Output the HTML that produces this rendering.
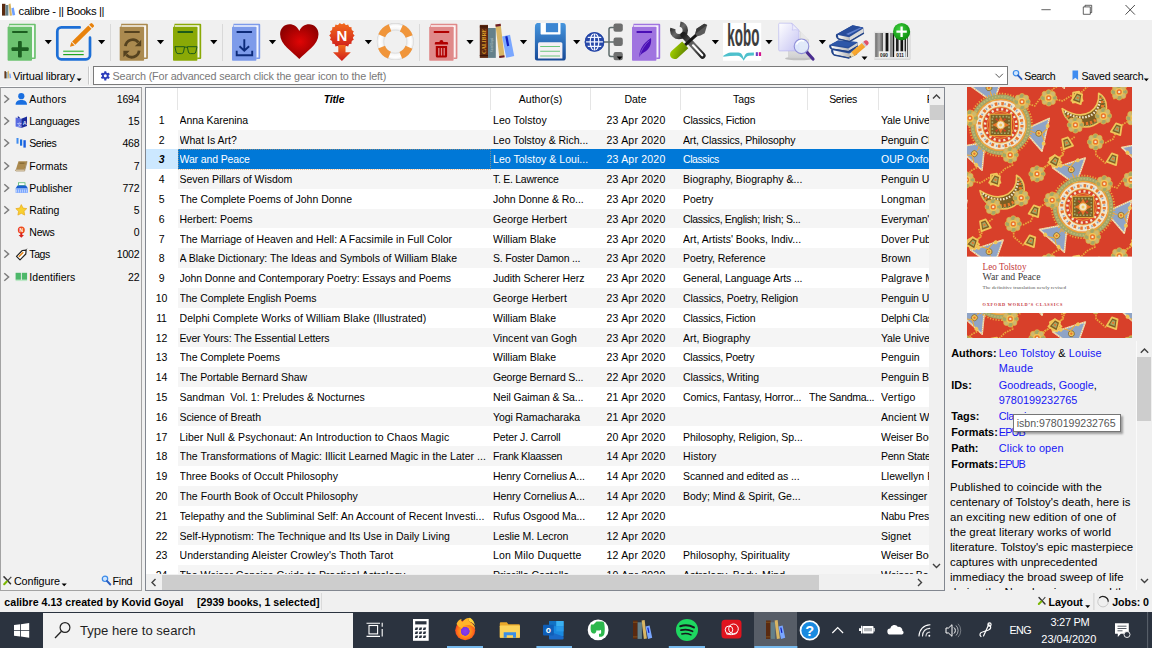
<!DOCTYPE html>
<html lang="en">
<head>
<meta charset="utf-8">
<title>calibre - || Books ||</title>
<style>
html,body{margin:0;padding:0;}
body{width:1152px;height:648px;overflow:hidden;background:#f0f0f0;font-family:"Liberation Sans",sans-serif;font-size:10.500px;color:#000;position:relative;}
*{box-sizing:border-box;}
.abs{position:absolute;}
#titlebar{position:absolute;left:0;top:0;width:1152px;height:20px;background:#fff;}
#titlebar .t{position:absolute;left:18.600px;top:3.500px;font-size:11.300px;letter-spacing:-0.340px;line-height:14px;white-space:nowrap;}
#toolbar{position:absolute;left:0;top:20px;width:1152px;height:45px;background:#f0f0f0;}
#toolbar svg.ic{position:absolute;top:2px;overflow:visible;}
.dd{position:absolute;width:0;height:0;border-left:3px solid transparent;border-right:3px solid transparent;border-top:3px solid #000;top:41px;}
.tsep{position:absolute;top:24px;width:1px;height:36px;background:#dcdcdc;}
#searchrow{position:absolute;left:0;top:65px;width:1152px;height:22px;}
.lbl{position:absolute;white-space:nowrap;line-height:14px;}
</style>
</head>
<body>
<div id="titlebar">
<svg class="abs" style="left:0;top:0" width="20" height="20" viewBox="0 0 20 20">
<rect x="2" y="3.8" width="3.4" height="11.8" fill="#5a2a10"/>
<rect x="5.4" y="5" width="3" height="10.6" fill="#64808a"/>
<polygon points="8.6,3.9 10.6,3.6 12,15.4 9.8,15.7" fill="#d9b664"/>
<polygon points="11.4,8.2 13.8,7.6 15.2,15 12.6,15.6" fill="#6fa0ff"/>
</svg>
<div class="t">calibre - || Books ||</div>
<svg class="abs" style="left:1030px;top:0" width="122" height="20" viewBox="0 0 122 20">
<path d="M11.4 9.7h9.3" stroke="#222" stroke-width="0.7" fill="none"/>
<path d="M53.3 6.9h7v7.4h-7z M55 6.900v-1.600h6.700v7.300h-1.400" stroke="#222" stroke-width="0.7" fill="none"/>
<path d="M95.5 5l9.400 9.600M104.900 5l-9.400 9.600" stroke="#222" stroke-width="0.8" fill="none"/>
</svg>
</div>
<svg id="tbsvg" class="abs" style="left:0;top:0" width="1152" height="66" viewBox="0 0 1152 66">
<defs>
<radialGradient id="gHeart" cx="0.52" cy="0.5" r="0.55"><stop offset="0" stop-color="#e00505"/><stop offset="1" stop-color="#8f0000"/></radialGradient>
<linearGradient id="gNews" x1="0" y1="0" x2="0" y2="1"><stop offset="0" stop-color="#f26a1c"/><stop offset="1" stop-color="#cf1c1c"/></linearGradient>
<linearGradient id="gSave" x1="0" y1="0" x2="0" y2="1"><stop offset="0" stop-color="#4595de"/><stop offset="1" stop-color="#184a97"/></linearGradient>
<radialGradient id="gBuoy" gradientUnits="userSpaceOnUse" cx="0" cy="0" r="18.500"><stop offset="0.600" stop-color="#d9d9d9"/><stop offset="0.700" stop-color="#f7f7f7"/><stop offset="0.850" stop-color="#ffffff"/><stop offset="0.940" stop-color="#f0f0f0"/><stop offset="1" stop-color="#d2d2d2"/></radialGradient>
<linearGradient id="gPage" x1="0" y1="0" x2="1" y2="1"><stop offset="0" stop-color="#ffffff"/><stop offset="1" stop-color="#c5c3f3"/></linearGradient>
<linearGradient id="gPage2" x1="0" y1="0" x2="0" y2="1"><stop offset="0" stop-color="#ffffff"/><stop offset="1" stop-color="#d0d0d0"/></linearGradient>
<linearGradient id="gGreenH" x1="0" y1="0" x2="1" y2="1"><stop offset="0" stop-color="#a6d400"/><stop offset="1" stop-color="#5e8200"/></linearGradient>
<linearGradient id="gWrench" x1="0" y1="0" x2="1" y2="1"><stop offset="0" stop-color="#1e1e1e"/><stop offset="0.5" stop-color="#6a6a6a"/><stop offset="1" stop-color="#222"/></linearGradient>
<radialGradient id="gPlus" cx="0.4" cy="0.35" r="0.7"><stop offset="0" stop-color="#3fd23f"/><stop offset="1" stop-color="#0a8a0a"/></radialGradient>
<linearGradient id="gBar" x1="0" y1="0" x2="1" y2="0"><stop offset="0" stop-color="#6a6a6a"/><stop offset="0.5" stop-color="#a8a8a8"/><stop offset="1" stop-color="#555"/></linearGradient>
<g id="book">
<path d="M1.600 0h25.600a1 1 0 0 1 1 1v33.300a1 1 0 0 1-1 1h-3v-30h-23.600z" fill="var(--c)"/>
<path d="M1.800 1.600h24.700v32.200h-2.300v-30.500h-22.400z" fill="#fff" opacity="0.92"/>
<rect x="0" y="3.100" width="24.400" height="34" rx="0.800" fill="var(--c)"/>
<rect x="4.500" y="7.200" width="15.600" height="2" rx="0.600" fill="var(--d)"/>
</g>
<path id="ddarrow" d="M-3.600 0h7.200l-3.600 4.200z" fill="#000"/>
</defs>

<!-- separators -->
<g fill="#d9d9d9"><rect x="110" y="24" width="1" height="37"/><rect x="222" y="24" width="1" height="37"/><rect x="419" y="24" width="1" height="37"/></g>

<!-- dropdown arrows -->
<g>
<use href="#ddarrow" x="48.300" y="40"/><use href="#ddarrow" x="101.600" y="40"/><use href="#ddarrow" x="160.500" y="40"/><use href="#ddarrow" x="213.800" y="40"/>
<use href="#ddarrow" x="272.500" y="40"/><use href="#ddarrow" x="368.400" y="40"/><use href="#ddarrow" x="470" y="40"/><use href="#ddarrow" x="523.500" y="40"/>
<use href="#ddarrow" x="576.700" y="40"/><use href="#ddarrow" x="715.400" y="40"/><use href="#ddarrow" x="769" y="40"/><use href="#ddarrow" x="822.400" y="40"/>
</g>

<!-- add book -->
<g transform="translate(7.600 23.700)" style="--c:#6cc270;--d:#1b5e20"><use href="#book"/>
<rect x="10.400" y="17.200" width="3.800" height="16.600" rx="1" fill="#1b5e20"/><rect x="3.900" y="23.600" width="17.200" height="3.800" rx="1" fill="#1b5e20"/></g>

<!-- edit metadata -->
<g>
<path d="M79.700 27.400h-18.400a4 4 0 0 0-4 4v23.900a4 4 0 0 0 4 4h24.700a4 4 0 0 0 4-4v-17.600" fill="none" stroke="#1d6fd6" stroke-width="2.700" stroke-linecap="round"/>
<path d="M63.200 51.300h20.500" stroke="#5cc35c" stroke-width="1.500"/><path d="M63.200 54.600h20.500" stroke="#1fa31f" stroke-width="1.200"/>
<path d="M70 46.700l1.400-4.600 3.200 3.300z" fill="#e8820c"/>
<path d="M72.100 41.400l16.200-15.900 3.200 3.300-16.200 15.900z" fill="#e8820c"/>
<path d="M89.100 24.800l1.400-1.400a1.300 1.300 0 0 1 1.800 0l1.400 1.500a1.300 1.300 0 0 1 0 1.800l-1.400 1.400z" fill="#e8820c"/>
</g>

<!-- convert -->
<g transform="translate(119.700 23.700)" style="--c:#ab8a4f;--d:#55421f"><use href="#book"/>
<path d="M5.800 22.500a7.200 7.200 0 0 1 12.800-3.800" fill="none" stroke="#55421f" stroke-width="2.800"/>
<path d="M15.200 22.600h6.300v-6.500z" fill="#55421f"/>
<path d="M19.400 27a7.200 7.200 0 0 1-12.800 3.800" fill="none" stroke="#55421f" stroke-width="2.800"/>
<path d="M10 27h-6.300v6.500z" fill="#55421f"/></g>

<!-- view -->
<g transform="translate(173 23.700)" style="--c:#8aa906;--d:#1d5a1a"><use href="#book"/>
<g fill="none" stroke="#1d5a1a" stroke-width="1"><path d="M1.900 23h9.700l-1.100 5.300a2 2 0 0 1-2 1.600h-3.400a2 2 0 0 1-2-1.600z"/><path d="M14.300 23h9.700l-1.200 5.300a2 2 0 0 1-2 1.600h-3.400a2 2 0 0 1-2-1.600z"/><path d="M11.400 23.800q1.500-0.900 3 0"/></g></g>

<!-- download -->
<g transform="translate(232 23.700)" style="--c:#7d9bea;--d:#0d2b7a"><use href="#book"/>
<path d="M12.300 15.600v11M7.500 22.500l4.800 4.600 4.800-4.600M4.700 27v4.600h15.500v-4.600" stroke="#0d2b7a" stroke-width="1.900" fill="none"/></g>

<!-- heart -->
<path d="M299.300 59c-7-7.500-19.200-14.500-19.200-24.800c0-6 4.300-9.900 9.300-9.900c4.500 0 8.200 2.500 9.900 6.800c1.700-4.300 5.400-6.800 9.900-6.800c5 0 9.300 3.900 9.300 9.900c0 10.300-12.200 17.300-19.200 24.800z" fill="url(#gHeart)"/>

<!-- fetch news -->
<g fill="url(#gNews)">
<circle cx="341.900" cy="35.500" r="11.300"/>
<polygon points="354.6,35.5 352.7,37.4 353.8,39.8 351.4,41.0 351.6,43.7 349.0,43.9 348.2,46.5 345.7,45.8 344.1,48.0 341.9,46.5 339.7,48.0 338.1,45.8 335.5,46.5 334.8,43.9 332.2,43.7 332.4,41.0 330.0,39.8 331.1,37.4 329.2,35.5 331.1,33.6 330.0,31.2 332.4,30.0 332.2,27.3 334.8,27.1 335.5,24.5 338.1,25.2 339.7,23.0 341.9,24.5 344.1,23.0 345.7,25.2 348.2,24.5 349.0,27.1 351.6,27.3 351.4,30.0 353.8,31.2 352.7,33.6"/>
<path d="M338.300 45h7.200v7.200h5.300l-8.900 8.700l-8.900-8.700h5.300z"/>
</g>
<text x="341.900" y="40.800" font-family="Liberation Sans,sans-serif" font-weight="bold" font-size="15" text-anchor="middle" fill="#fff">N</text>

<!-- lifebuoy -->
<g transform="translate(395.300 41.600)">
<circle r="14.800" fill="none" stroke="url(#gBuoy)" stroke-width="7.400"/>
<circle r="14.800" fill="none" stroke="#f0953a" stroke-width="7.400" stroke-dasharray="11.620 11.620" stroke-dashoffset="-5.810" transform="rotate(0)"/>
</g>

<!-- remove -->
<g transform="translate(429.200 23.700)" style="--c:#e08a8a;--d:#b00000"><use href="#book"/>
<g fill="#b00000"><path d="M5.600 19.600a1.300 1.300 0 0 1 1.300-1.300h3.300a2 2 0 0 1 4 0h3.400a1.300 1.300 0 0 1 1.300 1.300v1.200h-13.300z"/><path d="M6.600 22.300h11.300v10a1.600 1.600 0 0 1-1.600 1.600h-8.100a1.600 1.600 0 0 1-1.600-1.600z"/></g>
<path d="M9.600 24.300v7.600M12.300 24.300v7.600M15 24.300v7.600" stroke="#e08a8a" stroke-width="1.300"/></g>

<!-- library -->
<g>
<rect x="479.800" y="24.900" width="8.200" height="33" fill="#5a2710"/>
<rect x="479.800" y="26.400" width="8.200" height="1" fill="#3a1406"/><rect x="479.800" y="55" width="8.200" height="1" fill="#3a1406"/>
<text transform="translate(486.300 54) rotate(-90)" font-family="Liberation Serif,serif" font-weight="bold" font-size="5.200" fill="#e0a22a" textLength="25" lengthAdjust="spacingAndGlyphs">CALIBRE</text>
<rect x="488" y="28" width="7.800" height="29.900" fill="#64808a"/>
<text transform="translate(493.200 52) rotate(-90)" font-family="Liberation Sans,sans-serif" font-size="3" fill="#b9c8cc" textLength="14" lengthAdjust="spacingAndGlyphs">Kovid Goyal</text>
<polygon points="495.400,24.600 500.600,23.800 504.600,57.300 499.400,58.100" fill="#d9b664"/>
<polygon points="495.400,24.600 500.600,23.800 500.900,26 495.700,26.800" fill="#6a1a2a"/><polygon points="499.100,56 504.300,55.200 504.600,57.300 499.400,58.100" fill="#6a1a2a"/>
<polygon points="502.100,36.500 510,34.700 514.200,56 506.200,57.800" fill="#7aa7ff"/>
<polygon points="505.200,36.600 507.400,36.100 509.300,45.700 507.100,46.200" fill="#1020c0"/>
</g>

<!-- save -->
<g>
<path d="M536.900 23.100h26a2.900 2.900 0 0 1 2.900 2.900v31.700a2.900 2.900 0 0 1-2.900 2.900h-25.900a2.100 2.100 0 0 1-2.100-2.100v-31a4.400 4.400 0 0 1 2-4.400z" fill="url(#gSave)"/>
<path d="M540.600 23.100h19.900v10.300a1.200 1.200 0 0 1-1.200 1.200h-17.500a1.200 1.200 0 0 1-1.200-1.200z" fill="#fff"/>
<rect x="545.900" y="23.100" width="12.200" height="9.100" fill="#3c86d2"/>
<path d="M539.500 42.200h21.400a1.500 1.500 0 0 1 1.500 1.500v14.700h-24.400v-14.700a1.500 1.500 0 0 1 1.500-1.500z" fill="#f4f0f4"/>
<path d="M540.200 46.500h19.800M540.200 51.300h19.800M540.200 56h19.800" stroke="#6cc67c" stroke-width="1.100"/>
</g>

<!-- connect/share -->
<g>
<circle cx="594.500" cy="41.900" r="9.700" fill="#2748a8"/>
<g fill="none" stroke="#f2f5ff" stroke-width="1.250"><ellipse cx="594.500" cy="41.900" rx="4.300" ry="8.600"/><path d="M594.500 33v17.800M586 41.900h17M587.500 37.400h14M587.500 46.400h14"/></g>
<circle cx="594.500" cy="41.900" r="9.200" fill="none" stroke="#2748a8" stroke-width="1.400"/>
<path d="M604 41.900h10M614 27.400h-3.200a1.800 1.800 0 0 0-1.800 1.800v25.400a1.800 1.800 0 0 0 1.800 1.800h3.200" fill="none" stroke="#5d6b6b" stroke-width="1.500"/>
<g fill="#6e6f6f"><rect x="613.500" y="23.400" width="9.300" height="8.300" rx="2.200"/><rect x="613.500" y="37.600" width="9.300" height="8.300" rx="2.200"/><rect x="613.500" y="52" width="9.300" height="8.300" rx="2.200"/></g>
<path d="M616.700 56.600h5.800l-2.900 3.200z" fill="#000"/>
</g>

<!-- edit book -->
<g transform="translate(632 23.700)" style="--c:#a074e0;--d:#4a0fb5"><use href="#book"/>
<path d="M7.200 33.200c0.300-6.500 3-13.500 11.800-19c0.800 5.500-1.200 11.500-7.300 14.600c-1.700 0.900-3.200 2.300-4.500 4.400z" fill="#4a0fb5"/>
<path d="M7.600 32.500c1.500-6 5-11.500 9.500-15.500" stroke="#a074e0" stroke-width="0.600" fill="none"/></g>

<!-- preferences -->
<g>
<circle cx="679" cy="30.300" r="6.300" fill="none" stroke="url(#gWrench)" stroke-width="5.400" stroke-dasharray="30.680 8.900" stroke-dashoffset="-30.100"/>
<path d="M683.500 35l19 20.600" stroke="url(#gWrench)" stroke-width="6.200" stroke-linecap="round"/>
<path d="M693 45.300l9.300 10" stroke="#fff" stroke-width="2.100" stroke-linecap="round"/>
<g transform="translate(673.500 55.500) rotate(-42)">
<rect x="15" y="-1.500" width="17" height="3" fill="#151515"/>
<path d="M30.500-1.500l4.500-3 9 1.500 1.500 2.800-7.500 4.600-4.500-1.200-3-1.700z" fill="#5a5a5a"/>
<path d="M30.500-1.500l4.500-3 9 1.500 1.500 2.800z" fill="#3a3a3a"/>
<path d="M1.500-4.600h14.300v9.200h-14.300a4.600 4.600 0 0 1 0-9.200z" fill="url(#gGreenH)"/>
</g>
</g>

<!-- kobo -->
<g>
<rect x="723" y="22.900" width="38.200" height="37.900" fill="#fff"/>
<text transform="translate(727.300 45.500) scale(0.440 1)" font-family="Liberation Sans,sans-serif" font-weight="bold" font-size="30.500" fill="#3d3d3d" stroke="#3d3d3d" stroke-width="0.200">kobo</text>
<path d="M723.300 55.800c3-1.500 5-3.200 7.300-3.200h7.800c3 0 4.300 3 5.300 5.800c0.700-2.800 2-5.400 4.400-5.600l5.800-0.200v2.900l-4.900 0.300c-2.600 0.300-4 2.500-5.300 5c-1.600-3-3.500-5-6.800-5c-4.500 0-9 0.300-13.600 0.900z" fill="#4dc0cc"/>
<rect x="755.800" y="52.200" width="2.100" height="3.800" fill="#6b3fc0"/><rect x="758.800" y="52.200" width="2.300" height="3.800" fill="#d4148c"/>
</g>

<!-- similar books -->
<g>
<ellipse cx="799" cy="58.400" rx="14" ry="1.800" fill="#9a9a9a" opacity="0.550"/>
<path d="M788.500 31.500h11.500l8.500 8.500v18h-20z" fill="url(#gPage2)" stroke="#c8c8c8" stroke-width="0.500"/>
<path d="M800 31.500v8.500h8.500" fill="#e8e8e8" stroke="#c0c0c0" stroke-width="0.500"/>
<path d="M779.700 23.200h12l7.200 7.200v19.500a1 1 0 0 1-1 1h-18.200a1 1 0 0 1-1-1v-25.700a1 1 0 0 1 1-1z" fill="url(#gPage)" stroke="#b4b1ee" stroke-width="0.600"/>
<path d="M791.700 23.200c1.300 2.500 1.300 5 0.500 7c2.300-0.700 4.700-0.700 6.700 0.200z" fill="#eeeefc" stroke="#b4b1ee" stroke-width="0.500"/>
<path d="M806.700 52l6.300 7" stroke="#4a2d90" stroke-width="3.200" stroke-linecap="round"/>
<circle cx="801.500" cy="46.300" r="7.300" fill="#dfeafc" fill-opacity="0.850" stroke="#8f8fd8" stroke-width="1.100"/>
<path d="M796.500 44.500a5.300 5.300 0 0 1 7.500-3.300" stroke="#fff" stroke-width="1.500" fill="none"/>
</g>

<!-- manage series -->
<g stroke-linejoin="round">
<defs><linearGradient id="gPg" x1="0" y1="0" x2="1" y2="0"><stop offset="0" stop-color="#ffffff"/><stop offset="1" stop-color="#b9b9b9"/></linearGradient>
<linearGradient id="gPen" x1="0" y1="0" x2="1" y2="1"><stop offset="0" stop-color="#ffc24a"/><stop offset="1" stop-color="#f08a10"/></linearGradient></defs>
<!-- bottom book -->
<path d="M832.100 49.200l15 -5 10 4.500v5.500l-7.900 4.200-15.100-3.400q-3.200-2.400-2-5.800z" fill="#2a4f9a"/>
<path d="M833.100 50.300l16.100 3.200v3.900l-15.100-2.900z" fill="url(#gPg)"/><path d="M849.200 53.500l7.700-4.300v3.800l-7.700 4.400z" fill="#d6d6d6"/>
<path d="M832.100 49.200q-1.200 3.400 2 5.800l15.100 3.100" fill="none" stroke="#234488" stroke-width="1.300"/>
<!-- middle book -->
<path d="M830.200 44.800l7.800-4.200 19.400 1.300 0.500 4.100-9.500 5.700-16.700-2.800q-2.700-1.700-1.500-4.100z" fill="#2a4f9a"/>
<path d="M830.200 44.800l7.800-4.200 19.400 1.300-9.200 4.800z" fill="#2e57a8"/>
<path d="M831.200 45.800l17 2.600 0.200 2.700-16.700-2.700z" fill="url(#gPg)"/><path d="M848.200 48.400l9.200-5.600 0.300 2.700-9.300 5.600z" fill="#d2d2d2"/>
<path d="M830.200 44.800q-1.200 2.400 1.500 4.100l16.700 2.800 9.500-5.700" fill="none" stroke="#234488" stroke-width="1.300"/>
<!-- top book -->
<path d="M837 34.100l15.600-8.800 10.600 2.300 0.700 5.500-14.300 8.500-11.100-2.600q-3-2.200-1.500-4.900z" fill="#2a4f9a"/>
<path d="M837 34.100l15.600-8.800 10.600 2.300-14 8.900z" fill="#274c9c"/>
<path d="M846 34l14.500-6.500 1.500 0.500-13.500 7z" fill="#6f8fdc" opacity="0.800"/>
<path d="M838 35.100l11.200 2.200 0.400 3.600-11.100-2.400z" fill="url(#gPg)"/><path d="M849.200 37.300l14-8.700 0.500 4-14.100 8.300z" fill="#dadada"/>
<path d="M837 34.100q-1.500 2.700 1.500 4.900l11.100 2.600 14.300-8.500" fill="none" stroke="#234488" stroke-width="1.300"/>
<!-- pencil -->
<path d="M849.200 57.400l2.100-5.300 3.400 4z" fill="#f4dca0"/><path d="M849.200 57.400l0.800-2 1.300 1.500z" fill="#333"/>
<path d="M851.300 52.100l10.600-9.100 3.400 4-10.600 9.100z" fill="url(#gPen)"/>
<path d="M861.900 43l1.500-1.300 3.400 4-1.500 1.300z" fill="#c9c9c9"/>
<path d="M863.400 41.700l0.800-0.700a2.600 2.600 0 0 1 3.700 0.300a2.600 2.600 0 0 1-0.300 3.700l-0.800 0.700z" fill="#e0506a"/>
<path d="M861.500 56.600h6l-3 3.300z" fill="#000"/>
</g>

<!-- isbn barcode -->
<g>
<rect x="874.300" y="32.200" width="36" height="27.300" fill="#bdbdbd"/>
<rect x="873.900" y="31.700" width="36" height="27.200" fill="#e4e4e4"/>
<rect x="875.200" y="33" width="7.800" height="24" fill="url(#gBar)"/>
<rect x="885.600" y="33" width="2.800" height="24" fill="#111"/><rect x="890.500" y="33" width="1" height="24" fill="#333"/>
<rect x="892.600" y="33" width="1.600" height="24" fill="#111"/><rect x="896" y="33" width="2.600" height="24" fill="#222"/>
<rect x="900.500" y="33" width="2.600" height="24" fill="#111"/><rect x="904.600" y="33" width="1.400" height="24" fill="#222"/><rect x="907" y="33" width="0.800" height="24" fill="#444"/>
<rect x="878.800" y="51.300" width="10.500" height="6.500" fill="#efefef"/><rect x="894.500" y="51.300" width="11.200" height="6.500" fill="#efefef"/>
<text x="884" y="57" font-family="Liberation Sans,sans-serif" font-weight="bold" font-size="4.800" text-anchor="middle" fill="#222">090</text>
<text x="900.100" y="57" font-family="Liberation Sans,sans-serif" font-weight="bold" font-size="4.800" text-anchor="middle" fill="#222">011</text>
<circle cx="901.600" cy="31.700" r="8.600" fill="url(#gPlus)"/>
<path d="M901.600 26.500v10.400M896.400 31.700h10.400" stroke="#fff" stroke-width="2.300"/>
</g>
</svg>
<style>
#searchrow .vl{left:13px;top:-0.500px;font-size:11px;letter-spacing:-0.150px;line-height:22px;height:22px;}
#searchbox{position:absolute;left:93px;top:1px;width:915px;height:19px;background:#fff;border:1px solid #7a7a7a;}
#searchbox .ph{position:absolute;left:18.500px;top:1px;line-height:17px;font-size:10.800px;letter-spacing:-0.150px;color:#787878;white-space:nowrap;}
#leftpane{position:absolute;left:0;top:87px;width:142px;height:504px;background:#f1f1f1;border:1px solid #a3a3a3;border-top-color:#8c8f94;box-shadow:0 -1px 0 #fbfbfb;}
.trow{position:absolute;left:1px;width:139px;height:22.200px;line-height:22.200px;font-size:10.500px;white-space:nowrap;}
.trow .nm{position:absolute;left:27.300px;top:0;}
.trow .ct{position:absolute;right:1.700px;top:0;letter-spacing:-0.200px;}
.trow svg{position:absolute;left:0;top:0;}
.chev{fill:none;stroke:#7d7d7d;stroke-width:1.500;}
</style>
<div id="searchrow">
<svg class="abs" style="left:0;top:0" width="92" height="22" viewBox="0 0 92 22">
<rect x="4.400" y="6.200" width="1.600" height="7.200" fill="#6a3a1a"/><rect x="6" y="7" width="1.500" height="6.400" fill="#7a9098"/>
<polygon points="7.600,6 8.800,5.800 9.600,13.300 8.300,13.500" fill="#d9b664"/><polygon points="9.200,8.800 10.400,8.500 11.200,13 9.900,13.300" fill="#6fa0ff"/>
<path d="M76.600 13.400h5l-2.500 2.800z" fill="#000"/>
<rect x="88" y="1.500" width="1" height="18" fill="#c9c9c9"/><rect x="89" y="1.500" width="1" height="18" fill="#fdfdfd"/>
</svg>
<div class="lbl vl">Virtual library</div>
<div id="searchbox">
<svg class="abs" style="left:5px;top:2.600px" width="12" height="12" viewBox="0 0 12 12">
<g transform="translate(6.300 5.800)"><g fill="#2b3dbb"><rect x="-1.100" y="-4.600" width="2.200" height="9.200" rx="0.500"/><rect x="-1.100" y="-4.600" width="2.200" height="9.200" rx="0.500" transform="rotate(60)"/><rect x="-1.100" y="-4.600" width="2.200" height="9.200" rx="0.500" transform="rotate(120)"/><circle r="3.300"/></g><circle r="1.500" fill="#fff"/></g>
</svg>
<div class="ph">Search (For advanced search click the gear icon to the left)</div>
<svg class="abs" style="left:899.500px;top:4px" width="12" height="10" viewBox="0 0 12 10"><path d="M1.500 2.800l3.700 3.700 3.700-3.700" fill="none" stroke="#444" stroke-width="0.900"/></svg>
</div>
<svg class="abs" style="left:1010px;top:0" width="142" height="22" viewBox="0 0 142 22">
<circle cx="6" cy="8.200" r="2.700" fill="#cfe6ff" stroke="#3d8be8" stroke-width="1.200"/><path d="M8 10.400l3.500 3.800" stroke="#2a5fc0" stroke-width="1.900" stroke-linecap="round"/>
<path d="M62.500 5.500h5.600v9.600l-2.800-2.300-2.800 2.300z" fill="#3f8cf0"/>
<path d="M133.800 13.400h5l-2.500 2.800z" fill="#000"/>
</svg>
<div class="lbl" style="left:1024.300px;top:-0.500px;font-size:10.600px;letter-spacing:-0.450px;line-height:22px;">Search</div>
<div class="lbl" style="left:1081.500px;top:-0.500px;font-size:10.600px;letter-spacing:-0.250px;line-height:22px;">Saved search</div>
</div>

<div id="leftpane">
<div class="trow" style="top:0.0px"><svg width="28" height="22" viewBox="0 0 28 22"><path class="chev" d="M2.300 7.200l4.300 3.800-4.300 3.800"/><circle cx="19.300" cy="8.200" r="3.100" fill="#1a6fe0"/><path d="M13.600 16.800c0-3.500 2.500-4.800 5.700-4.800s5.700 1.300 5.700 4.800z" fill="#1a6fe0"/></svg><span class="nm" style="letter-spacing:0.13px">Authors</span><span class="ct">1694</span></div>
<div class="trow" style="top:22.2px"><svg width="28" height="22" viewBox="0 0 28 22"><path class="chev" d="M2.300 7.200l4.300 3.800-4.300 3.800"/><path d="M13.600 7.500l5.700 1.200v9.300l-5.700-1.500z" fill="#5a6ae0"/><path d="M19.300 8.700l5.700-2.200v9.500l-5.700 2z" fill="#1a2a9a"/><path d="M15.800 6l2 1.500v1l-2-0.500z" fill="#1a2a9a"/><text x="14.800" y="15.500" font-size="5" font-family="Liberation Sans,Noto Sans CJK SC,sans-serif" fill="#cfd6ff">文</text><text x="20.800" y="15" font-size="5.500" font-weight="bold" font-family="Liberation Sans,sans-serif" fill="#dfe4ff">A</text></svg><span class="nm" style="letter-spacing:-0.19px">Languages</span><span class="ct">15</span></div>
<div class="trow" style="top:44.4px"><svg width="28" height="22" viewBox="0 0 28 22"><path class="chev" d="M2.300 7.200l4.300 3.800-4.300 3.800"/><rect x="14.500" y="6" width="2" height="5.700" fill="#3f8cf0"/><rect x="18" y="7.400" width="2.200" height="6.300" fill="#1a6fe0"/><rect x="21.400" y="8.200" width="2.400" height="7.400" fill="#1a5fe0"/></svg><span class="nm" style="letter-spacing:-0.47px">Series</span><span class="ct">468</span></div>
<div class="trow" style="top:66.6px"><svg width="28" height="22" viewBox="0 0 28 22"><path class="chev" d="M2.300 7.200l4.300 3.800-4.300 3.800"/><path d="M16.500 6.300h8.300l-2.300 8.300h-8.600z" fill="#ab8a4f"/><path d="M13.900 14.600h8.600l2.300-8.300v1.600l-2.200 8.200h-8.200a0.800 0.800 0 0 1-0.500-1.500z" fill="#e9dcc0" stroke="#8a6d3a" stroke-width="0.500"/><path d="M17.500 8.200h5" stroke="#6e5526" stroke-width="0.800"/></svg><span class="nm" style="letter-spacing:-0.06px">Formats</span><span class="ct">7</span></div>
<div class="trow" style="top:88.8px"><svg width="28" height="22" viewBox="0 0 28 22"><path class="chev" d="M2.300 7.200l4.300 3.800-4.300 3.800"/><rect x="16.500" y="5.800" width="6.500" height="2.600" fill="#fff" stroke="#3fae5a" stroke-width="0.700"/><path d="M15.500 8.400h8.500l2 3.200h-12.500z" fill="#1a5fd0"/><rect x="13.600" y="11.600" width="12.300" height="4.300" fill="#7aa7ff"/><path d="M14.500 12.500v3M16.500 12.500v3M18.500 12.500v3M20.500 12.500v3M22.500 12.500v3M24.500 12.500v3" stroke="#dfe9ff" stroke-width="0.600"/></svg><span class="nm" style="letter-spacing:-0.09px">Publisher</span><span class="ct">772</span></div>
<div class="trow" style="top:111.0px"><svg width="28" height="22" viewBox="0 0 28 22"><path class="chev" d="M2.300 7.200l4.300 3.800-4.300 3.800"/><path d="M19.300 5.600l1.700 3.500 3.800 0.500-2.800 2.700 0.700 3.800-3.400-1.800-3.400 1.800 0.700-3.800-2.800-2.700 3.800-0.500z" fill="#f8d030" stroke="#e8a818" stroke-width="0.700" stroke-linejoin="round"/></svg><span class="nm" style="letter-spacing:-0.05px">Rating</span><span class="ct">5</span></div>
<div class="trow" style="top:133.2px"><svg width="28" height="22" viewBox="0 0 28 22"><circle cx="19.300" cy="9" r="3.500" fill="#ee4a1c"/><path d="M18.300 12h2v2h1.700l-2.700 2.800-2.700-2.800h1.700z" fill="#d8241c"/><text x="19.300" y="10.800" font-size="5" font-weight="bold" text-anchor="middle" font-family="Liberation Sans,sans-serif" fill="#fff">N</text></svg><span class="nm" style="letter-spacing:-0.25px">News</span><span class="ct">0</span></div>
<div class="trow" style="top:155.4px"><svg width="28" height="22" viewBox="0 0 28 22"><path class="chev" d="M2.300 7.200l4.300 3.800-4.300 3.800"/><path d="M14.500 13.300l5.800-5.800 3.800-0.300-0.300 3.800-5.800 5.800z" fill="#fff" stroke="#222" stroke-width="1.200" stroke-linejoin="round"/><path d="M16.800 13.800l4.500-4.500" stroke="#e8820c" stroke-width="1.400"/><path d="M23.500 7.500l1.500-1.800" stroke="#222" stroke-width="0.700"/></svg><span class="nm" style="letter-spacing:-0.40px">Tags</span><span class="ct">1002</span></div>
<div class="trow" style="top:177.6px"><svg width="28" height="22" viewBox="0 0 28 22"><path class="chev" d="M2.300 7.200l4.300 3.800-4.300 3.800"/><rect x="13.600" y="6.800" width="5.300" height="7" fill="#4db86a"/><rect x="19.800" y="6.800" width="5.300" height="7" fill="#4db86a"/><rect x="13.600" y="13.800" width="11.500" height="1.300" fill="#bfe8c8"/></svg><span class="nm" style="letter-spacing:0.05px">Identifiers</span><span class="ct">22</span></div>

<svg class="abs" style="left:1px;top:480px" width="140" height="22" viewBox="0 0 140 22">
<path d="M2 8.800l6.500 7" stroke="#333" stroke-width="1.500" stroke-linecap="round"/><path d="M9.300 8.800l-4 4.300" stroke="#444" stroke-width="1.200"/><path d="M4.800 13.600l-2.600 2.600" stroke="#7ab800" stroke-width="2.100" stroke-linecap="round"/>
<path d="M59.600 15.600h5.200l-2.600 2.600z" fill="#000"/>
<circle cx="103" cy="10.800" r="2.700" fill="#cfe6ff" stroke="#3d8be8" stroke-width="1.200"/><path d="M105 13l3.300 3.500" stroke="#2a5fc0" stroke-width="1.900" stroke-linecap="round"/>
</svg>
<div class="lbl" style="left:12.900px;top:482px;font-size:10.800px;letter-spacing:-0.100px;line-height:22px;">Configure</div>
<div class="lbl" style="left:111.500px;top:482px;font-size:10.800px;letter-spacing:-0.300px;line-height:22px;">Find</div>
</div>
<style>
#tbl{position:absolute;left:145px;top:87px;width:800px;height:504px;background:#fff;border:1px solid #828790;overflow:hidden;}
#tbl .vp{position:absolute;left:0;top:0;width:783px;height:486.400px;overflow:hidden;}
#tbl .hd{position:absolute;left:0;top:0;width:783px;height:22px;background:#fff;}
#tbl .hd span{position:absolute;top:0;height:22px;line-height:22.500px;text-align:center;white-space:nowrap;letter-spacing:-0.150px;border-right:1px solid #e5e5e5;}
.r{position:absolute;left:0;width:783px;height:19.800px;line-height:21.800px;white-space:nowrap;letter-spacing:-0.150px;}
.r span{position:absolute;top:0;height:19.800px;overflow:hidden;}
.r .n{left:0;width:32px;text-align:center;background:#fff;padding-right:1px;}
.r .bg{left:32px;width:751px;}
.r.alt .bg{background:#f5f5f5;}
.r.sel .bg{background:#0078d7;}
.r.sel{color:#fff;}
.r.sel .n{background:#cce8ff;color:#000;font-weight:bold;font-style:italic;}
.r .c1{left:33.500px;width:311px;letter-spacing:0;}
.r .c2{left:347px;width:98px;letter-spacing:0.020px;}
.r .c3{left:445px;width:90px;text-align:center;letter-spacing:0.200px;}
.r .c4{left:537px;width:125px;letter-spacing:0.030px;}
.r .c5{left:663px;width:70px;}
.r .c6{left:735px;width:48px;}
.sb{background:#f0f0f0;position:absolute;}
.th{background:#cdcdcd;position:absolute;}
</style>
<div id="tbl">
<div class="vp">
<div class="r" style="top:21.7px"><span class="bg"></span><span class="n">1</span><span class="c1" style="letter-spacing:-0.079px">Anna Karenina</span><span class="c2" style="letter-spacing:0.083px">Leo Tolstoy</span><span class="c3" style="letter-spacing:0.213px">23 Apr 2020</span><span class="c4" style="letter-spacing:-0.206px">Classics, Fiction</span><span class="c5"></span><span class="c6" style="letter-spacing:-0.136px">Yale University Press</span></div>
<div class="r alt" style="top:41.5px"><span class="bg"></span><span class="n">2</span><span class="c1" style="letter-spacing:0.015px">What Is Art?</span><span class="c2" style="letter-spacing:-0.015px">Leo Tolstoy &amp; Rich...</span><span class="c3" style="letter-spacing:0.213px">23 Apr 2020</span><span class="c4" style="letter-spacing:-0.129px">Art, Classics, Philosophy</span><span class="c5"></span><span class="c6" style="letter-spacing:-0.200px">Penguin Classics</span></div>
<div class="r sel" style="top:61.3px"><span class="bg"></span><span class="n">3</span><span class="c1" style="letter-spacing:-0.127px">War and Peace</span><span class="c2" style="letter-spacing:0.038px">Leo Tolstoy &amp; Loui...</span><span class="c3" style="letter-spacing:0.213px">23 Apr 2020</span><span class="c4" style="letter-spacing:-0.410px">Classics</span><span class="c5"></span><span class="c6" style="letter-spacing:-0.005px">OUP Oxford</span></div>
<div class="r alt" style="top:81.1px"><span class="bg"></span><span class="n">4</span><span class="c1" style="letter-spacing:-0.045px">Seven Pillars of Wisdom</span><span class="c2" style="letter-spacing:-0.274px">T. E. Lawrence</span><span class="c3" style="letter-spacing:0.213px">23 Apr 2020</span><span class="c4" style="letter-spacing:0.048px">Biography, Biography &amp;...</span><span class="c5"></span><span class="c6" style="letter-spacing:-0.095px">Penguin UK</span></div>
<div class="r" style="top:100.9px"><span class="bg"></span><span class="n">5</span><span class="c1" style="letter-spacing:-0.007px">The Complete Poems of John Donne</span><span class="c2" style="letter-spacing:-0.058px">John Donne &amp; Ro...</span><span class="c3" style="letter-spacing:0.213px">23 Apr 2020</span><span class="c4" style="letter-spacing:-0.006px">Poetry</span><span class="c5"></span><span class="c6" style="letter-spacing:0.076px">Longman</span></div>
<div class="r alt" style="top:120.7px"><span class="bg"></span><span class="n">6</span><span class="c1" style="letter-spacing:-0.039px">Herbert: Poems</span><span class="c2" style="letter-spacing:0.066px">George Herbert</span><span class="c3" style="letter-spacing:0.213px">23 Apr 2020</span><span class="c4" style="letter-spacing:-0.306px">Classics, English; Irish; S...</span><span class="c5"></span><span class="c6" style="letter-spacing:-0.112px">Everyman's Library</span></div>
<div class="r" style="top:140.5px"><span class="bg"></span><span class="n">7</span><span class="c1" style="letter-spacing:0.001px">The Marriage of Heaven and Hell: A Facsimile in Full Color</span><span class="c2" style="letter-spacing:-0.003px">William Blake</span><span class="c3" style="letter-spacing:0.213px">23 Apr 2020</span><span class="c4" style="letter-spacing:0.005px">Art, Artists' Books, Indiv...</span><span class="c5"></span><span class="c6" style="letter-spacing:0.031px">Dover Publications</span></div>
<div class="r alt" style="top:160.3px"><span class="bg"></span><span class="n">8</span><span class="c1" style="letter-spacing:-0.019px">A Blake Dictionary: The Ideas and Symbols of William Blake</span><span class="c2" style="letter-spacing:-0.203px">S. Foster Damon ...</span><span class="c3" style="letter-spacing:0.213px">23 Apr 2020</span><span class="c4" style="letter-spacing:-0.085px">Poetry, Reference</span><span class="c5"></span><span class="c6" style="letter-spacing:0.024px">Brown</span></div>
<div class="r" style="top:180.1px"><span class="bg"></span><span class="n">9</span><span class="c1" style="letter-spacing:-0.077px">John Donne and Contemporary Poetry: Essays and Poems</span><span class="c2" style="letter-spacing:-0.078px">Judith Scherer Herz</span><span class="c3" style="letter-spacing:0.213px">23 Apr 2020</span><span class="c4" style="letter-spacing:-0.124px">General, Language Arts ...</span><span class="c5"></span><span class="c6" style="letter-spacing:-0.002px">Palgrave Macmillan</span></div>
<div class="r alt" style="top:199.9px"><span class="bg"></span><span class="n">10</span><span class="c1" style="letter-spacing:-0.075px">The Complete English Poems</span><span class="c2" style="letter-spacing:0.066px">George Herbert</span><span class="c3" style="letter-spacing:0.213px">23 Apr 2020</span><span class="c4" style="letter-spacing:-0.125px">Classics, Poetry, Religion</span><span class="c5"></span><span class="c6" style="letter-spacing:-0.095px">Penguin UK</span></div>
<div class="r" style="top:219.7px"><span class="bg"></span><span class="n">11</span><span class="c1" style="letter-spacing:0.071px">Delphi Complete Works of William Blake (Illustrated)</span><span class="c2" style="letter-spacing:-0.003px">William Blake</span><span class="c3" style="letter-spacing:0.213px">23 Apr 2020</span><span class="c4" style="letter-spacing:-0.206px">Classics, Fiction</span><span class="c5"></span><span class="c6" style="letter-spacing:-0.161px">Delphi Classics</span></div>
<div class="r alt" style="top:239.5px"><span class="bg"></span><span class="n">12</span><span class="c1" style="letter-spacing:-0.159px">Ever Yours: The Essential Letters</span><span class="c2" style="letter-spacing:0.038px">Vincent van Gogh</span><span class="c3" style="letter-spacing:0.213px">23 Apr 2020</span><span class="c4" style="letter-spacing:0.060px">Art, Biography</span><span class="c5"></span><span class="c6" style="letter-spacing:-0.136px">Yale University Press</span></div>
<div class="r" style="top:259.3px"><span class="bg"></span><span class="n">13</span><span class="c1" style="letter-spacing:-0.058px">The Complete Poems</span><span class="c2" style="letter-spacing:-0.003px">William Blake</span><span class="c3" style="letter-spacing:0.213px">23 Apr 2020</span><span class="c4" style="letter-spacing:-0.243px">Classics, Poetry</span><span class="c5"></span><span class="c6" style="letter-spacing:0.008px">Penguin</span></div>
<div class="r alt" style="top:279.1px"><span class="bg"></span><span class="n">14</span><span class="c1" style="letter-spacing:-0.087px">The Portable Bernard Shaw</span><span class="c2" style="letter-spacing:-0.196px">George Bernard S...</span><span class="c3" style="letter-spacing:0.213px">22 Apr 2020</span><span class="c4" style="letter-spacing:-0.089px">Classics, Writing</span><span class="c5"></span><span class="c6" style="letter-spacing:-0.045px">Penguin Books</span></div>
<div class="r" style="top:298.9px"><span class="bg"></span><span class="n">15</span><span class="c1" style="letter-spacing:0.009px">Sandman&nbsp; Vol. 1: Preludes &amp; Nocturnes</span><span class="c2" style="letter-spacing:-0.101px">Neil Gaiman &amp; Sa...</span><span class="c3" style="letter-spacing:0.213px">21 Apr 2020</span><span class="c4" style="letter-spacing:-0.108px">Comics, Fantasy, Horror...</span><span class="c5" style="letter-spacing:-0.280px">The Sandma...</span><span class="c6" style="letter-spacing:0.290px">Vertigo</span></div>
<div class="r alt" style="top:318.7px"><span class="bg"></span><span class="n">16</span><span class="c1" style="letter-spacing:-0.086px">Science of Breath</span><span class="c2" style="letter-spacing:-0.090px">Yogi Ramacharaka</span><span class="c3" style="letter-spacing:0.213px">21 Apr 2020</span><span class="c4"></span><span class="c5"></span><span class="c6" style="letter-spacing:0.075px">Ancient Wisdom Publications</span></div>
<div class="r" style="top:338.5px"><span class="bg"></span><span class="n">17</span><span class="c1" style="letter-spacing:0.109px">Liber Null &amp; Psychonaut: An Introduction to Chaos Magic</span><span class="c2" style="letter-spacing:-0.160px">Peter J. Carroll</span><span class="c3" style="letter-spacing:0.213px">20 Apr 2020</span><span class="c4" style="letter-spacing:-0.083px">Philosophy, Religion, Sp...</span><span class="c5"></span><span class="c6" style="letter-spacing:-0.095px">Weiser Books</span></div>
<div class="r alt" style="top:358.3px"><span class="bg"></span><span class="n">18</span><span class="c1" style="letter-spacing:0.026px">The Transformations of Magic: Illicit Learned Magic in the Later ...</span><span class="c2" style="letter-spacing:-0.277px">Frank Klaassen</span><span class="c3" style="letter-spacing:0.213px">14 Apr 2020</span><span class="c4" style="letter-spacing:0.113px">History</span><span class="c5"></span><span class="c6" style="letter-spacing:-0.239px">Penn State Press</span></div>
<div class="r" style="top:378.1px"><span class="bg"></span><span class="n">19</span><span class="c1" style="letter-spacing:0.007px">Three Books of Occult Philosophy</span><span class="c2" style="letter-spacing:-0.078px">Henry Cornelius A...</span><span class="c3" style="letter-spacing:0.213px">14 Apr 2020</span><span class="c4" style="letter-spacing:-0.105px">Scanned and edited as ...</span><span class="c5"></span><span class="c6" style="letter-spacing:0.003px">Llewellyn Publications</span></div>
<div class="r alt" style="top:397.9px"><span class="bg"></span><span class="n">20</span><span class="c1" style="letter-spacing:0.043px">The Fourth Book of Occult Philosophy</span><span class="c2" style="letter-spacing:-0.078px">Henry Cornelius A...</span><span class="c3" style="letter-spacing:0.213px">14 Apr 2020</span><span class="c4" style="letter-spacing:-0.009px">Body; Mind &amp; Spirit, Ge...</span><span class="c5"></span><span class="c6" style="letter-spacing:-0.049px">Kessinger Publishing</span></div>
<div class="r" style="top:417.7px"><span class="bg"></span><span class="n">21</span><span class="c1" style="letter-spacing:0.020px">Telepathy and the Subliminal Self: An Account of Recent Investi...</span><span class="c2" style="letter-spacing:-0.078px">Rufus Osgood Ma...</span><span class="c3" style="letter-spacing:0.213px">12 Apr 2020</span><span class="c4"></span><span class="c5"></span><span class="c6" style="letter-spacing:-0.176px">Nabu Press</span></div>
<div class="r alt" style="top:437.5px"><span class="bg"></span><span class="n">22</span><span class="c1" style="letter-spacing:0.020px">Self-Hypnotism: The Technique and Its Use in Daily Living</span><span class="c2" style="letter-spacing:-0.107px">Leslie M. Lecron</span><span class="c3" style="letter-spacing:0.213px">12 Apr 2020</span><span class="c4"></span><span class="c5"></span><span class="c6" style="letter-spacing:0.008px">Signet</span></div>
<div class="r" style="top:457.3px"><span class="bg"></span><span class="n">23</span><span class="c1" style="letter-spacing:0.097px">Understanding Aleister Crowley's Thoth Tarot</span><span class="c2" style="letter-spacing:0.198px">Lon Milo Duquette</span><span class="c3" style="letter-spacing:0.213px">12 Apr 2020</span><span class="c4" style="letter-spacing:0.086px">Philosophy, Spirituality</span><span class="c5"></span><span class="c6" style="letter-spacing:-0.095px">Weiser Books</span></div>
<div class="r alt" style="top:477.1px"><span class="bg"></span><span class="n">24</span><span class="c1" style="letter-spacing:-0.009px">The Weiser Concise Guide to Practical Astrology</span><span class="c2" style="letter-spacing:-0.055px">Priscilla Costello</span><span class="c3" style="letter-spacing:0.213px">10 Apr 2020</span><span class="c4" style="letter-spacing:0.075px">Astrology, Body, Mind...</span><span class="c5"></span><span class="c6" style="letter-spacing:-0.095px">Weiser Books</span></div>
<div class="abs" style="left:32px;top:61px;width:313px;height:21px;border:1px dotted rgba(226,150,80,0.600);"></div>
<div class="hd">
<span style="left:0;width:32px;"></span>
<span style="left:32px;width:313px;font-weight:bold;font-style:italic;">Title</span>
<span style="left:345px;width:100px;letter-spacing:0.046px">Author(s)</span>
<span style="left:445px;width:90px;letter-spacing:-0.005px">Date</span>
<span style="left:535px;width:127px;letter-spacing:-0.077px">Tags</span>
<span style="left:662px;width:71px;letter-spacing:-0.342px">Series</span>
<span style="left:733px;width:50px;border-right:none;text-align:left;padding-left:47.700px;overflow:hidden;">Publisher</span>
</div>
</div>
<div class="sb" style="left:783px;top:0;width:15px;height:487px;"></div>
<div class="th" style="left:784px;top:16.500px;width:14px;height:15.200px;"></div>
<svg class="abs" style="left:783px;top:0" width="15" height="487" viewBox="0 0 15 487"><path d="M4 10.500l3.500-3.500 3.500 3.500" fill="none" stroke="#404040" stroke-width="1.400"/><path d="M4 476l3.500 3.500 3.500-3.500" fill="none" stroke="#404040" stroke-width="1.400"/></svg>
<div class="sb" style="left:0;top:486.400px;width:798px;height:15.600px;"></div>
<div class="th" style="left:15.500px;top:487.400px;width:657px;height:14.600px;"></div>
<svg class="abs" style="left:0;top:487px" width="783" height="15" viewBox="0 0 783 15"><path d="M9.500 4l-3.500 3.500 3.500 3.500" fill="none" stroke="#404040" stroke-width="1.400"/><path d="M772 4l3.500 3.500-3.500 3.500" fill="none" stroke="#404040" stroke-width="1.400"/></svg>
</div>
<svg id="cover" class="abs" style="left:967px;top:87px" width="165" height="251" viewBox="0 0 165 251">
<defs><clipPath id="cvc"><rect x="0" y="0" width="165" height="251"/></clipPath>
<g id="ros"><circle cx="5.5" cy="0.0" r="2.700" fill="#a3a868" stroke="#e3b044" stroke-width="0.800"/><circle cx="3.9" cy="3.9" r="2.700" fill="#cdb970" stroke="#e3b044" stroke-width="0.800"/><circle cx="0.0" cy="5.5" r="2.700" fill="#a3a868" stroke="#e3b044" stroke-width="0.800"/><circle cx="-3.9" cy="3.9" r="2.700" fill="#cdb970" stroke="#e3b044" stroke-width="0.800"/><circle cx="-5.5" cy="0.0" r="2.700" fill="#a3a868" stroke="#e3b044" stroke-width="0.800"/><circle cx="-3.9" cy="-3.9" r="2.700" fill="#cdb970" stroke="#e3b044" stroke-width="0.800"/><circle cx="-0.0" cy="-5.5" r="2.700" fill="#a3a868" stroke="#e3b044" stroke-width="0.800"/><circle cx="3.9" cy="-3.9" r="2.700" fill="#cdb970" stroke="#e3b044" stroke-width="0.800"/><circle r="4" fill="#f0c65a"/><circle r="2.600" fill="#e9762a"/><circle r="1.200" fill="#f1e6cb"/></g>
<g id="tri"><path d="M23.4 0L46.0 -16.9L46.0 16.9z" fill="#8fa4c6" stroke="#f1e6cb" stroke-width="1.500" stroke-linejoin="round"/><path d="M23.4 0L46.0 -16.9L46.0 16.9z" fill="none" stroke="#e9a93c" stroke-width="0.700" stroke-dasharray="1 1.200"/><circle cx="39" cy="0" r="3" fill="#f0c65a" stroke="#7d5f24" stroke-width="0.700"/><circle cx="39" cy="0" r="1.200" fill="#e9762a"/><path d="M29 0h6M42 0l4-6M42 0l4 6" stroke="#e9a93c" stroke-width="1.100" fill="none"/><circle cx="46" cy="-9" r="2" fill="#f0c65a"/><circle cx="46" cy="9" r="2" fill="#f0c65a"/></g>
<g id="medal"><use href="#tri" transform="rotate(12.5)"/><use href="#tri" transform="rotate(132.5)"/><use href="#tri" transform="rotate(252.5)"/><circle r="31.300" fill="none" stroke="#e9a93c" stroke-width="1.800" stroke-dasharray="1.300 1.500"/><circle r="28.200" fill="none" stroke="#a3a868" stroke-width="4.200"/><circle r="28.200" fill="none" stroke="#c7bd7f" stroke-width="1.600" stroke-dasharray="1.100 2"/><circle r="25.400" fill="none" stroke="#e9a93c" stroke-width="1.600"/><circle r="24.700" fill="#f1e6cb"/><circle r="21.300" fill="none" stroke="#e9762a" stroke-width="3.200" stroke-dasharray="2.600 4.090"/><circle r="21.300" fill="none" stroke="#8fa4c6" stroke-width="2" stroke-dasharray="1.400 5.290" stroke-dashoffset="-3.200"/><circle r="18" fill="#d8402a" stroke="#e9a93c" stroke-width="0.900"/><circle r="15.700" fill="none" stroke="#f1e6cb" stroke-width="2.400" stroke-dasharray="2.200 2.730"/><circle r="13.400" fill="#d8402a" stroke="#e9a93c" stroke-width="0.800"/><rect x="-10.700" y="-10.700" width="21.400" height="21.400" fill="#7d5f24" stroke="#e9a93c" stroke-width="1.100"/><rect x="-8.300" y="-8.300" width="16.600" height="16.600" fill="none" stroke="#a3a868" stroke-width="1.600" stroke-dasharray="1.700 1.620"/><path d="M0-8.500l2.800 5.700 5.700 2.800-5.700 2.800-2.800 5.700-2.800-5.700-5.700-2.800 5.700-2.800z" fill="#e9762a"/><path d="M-5.500-5.500l4 2.500-2.500-4zM5.500-5.500l-4 2.500 2.500-4zM-5.500 5.500l4-2.500-2.500 4zM5.500 5.500l-4-2.500 2.500 4z" fill="#d8402a"/><circle r="4" fill="#f1e6cb" stroke="#e9a93c" stroke-width="0.800"/><circle r="1.500" fill="#f0c65a"/><use href="#ros" x="21.3" y="-23.2"/><use href="#ros" x="9.5" y="30.0"/><use href="#ros" x="-30.8" y="-6.8"/></g>
<g id="key"><path d="M-5-4.800h10l-2 9.600h-6z" fill="#7d5f24" stroke="#f0c65a" stroke-width="1.800" stroke-linejoin="round"/><path d="M-2.500-2.300h5l-1.100 4.800h-2.800z" fill="#a3a868"/><circle r="1.100" fill="#e9762a"/></g>
<g id="cres"><path d="M-22.200-1.300C-20 10-10 17 1 17C12 17 22 8 22-3C22-9 19-14 14.300-16.600C15-8 12-2 6 2C-2 7-12 5-22.200-1.300z" fill="#7d5f24" stroke="#f0c65a" stroke-width="1.700" stroke-linejoin="round"/><path d="M-17 5.500C-12 12-5 14 2 13.500C10 13 17 7 18-2C18.500-6 17.500-10 16-12.500" fill="none" stroke="#e9762a" stroke-width="3" stroke-dasharray="2.200 2"/><path d="M-19.500 1.500C-13 7-4 9 4 6.500C11 4 15-3 16-11" fill="none" stroke="#f1e6cb" stroke-width="2.200" stroke-dasharray="1.600 1.500"/><path d="M-20.500 3.500C-16 13-8 16.500 1 16C11 15.500 20.500 8 20.500-3C20.500-8 18.500-12 16-15" fill="none" stroke="#a3a868" stroke-width="1.300" stroke-dasharray="1.100 1.300"/><use href="#ros" x="-9" y="15"/><use href="#ros" x="19" y="6"/></g>
<g id="motif"><path d="M20.900-22.900L34-19L39-26L48-27L62-24L70-29L77-27" fill="none" stroke="#e9a93c" stroke-width="1.700" stroke-dasharray="1.600 1" stroke-linejoin="round"/><path d="M9.300 29.600L12 40L4 44L-6 54L-10 60" fill="none" stroke="#e9a93c" stroke-width="1.700" stroke-dasharray="1.600 1" stroke-linejoin="round"/><path d="M-30.300-6.700L-40-2L-48 4L-52 14L-60 18" fill="none" stroke="#e9a93c" stroke-width="1.700" stroke-dasharray="1.600 1" stroke-linejoin="round"/><path d="M54 36L62 30L66 18L74 12" fill="none" stroke="#e9a93c" stroke-width="1.700" stroke-dasharray="1.600 1" stroke-linejoin="round"/><path d="M54 36L44 42L40 52L30 56" fill="none" stroke="#e9a93c" stroke-width="1.700" stroke-dasharray="1.600 1" stroke-linejoin="round"/><path d="M30-48L22-44L13-52L12.500-65" fill="none" stroke="#e9a93c" stroke-width="1.700" stroke-dasharray="1.600 1" stroke-linejoin="round"/><path d="M-46-33L-38-40L-28-46L-20-52L-22-60" fill="none" stroke="#e9a93c" stroke-width="1.700" stroke-dasharray="1.600 1" stroke-linejoin="round"/><path d="M48-27L52-36L60-40" fill="none" stroke="#e9a93c" stroke-width="1.700" stroke-dasharray="1.600 1" stroke-linejoin="round"/><use href="#medal"/><use href="#cres" x="1.500" y="67"/><use href="#ros" x="-46.0" y="-33.0"/><use href="#ros" x="48.0" y="-27.0"/><use href="#ros" x="12.5" y="-65.0"/><use href="#key" transform="translate(-48.0 4.0) rotate(200)"/><use href="#key" transform="translate(-6.0 54.0) rotate(170)"/><use href="#key" transform="translate(66.0 18.0) rotate(160)"/><use href="#key" transform="translate(30.0 -48.0) rotate(200)"/><use href="#key" transform="translate(54.0 36.0) rotate(150)"/><use href="#key" transform="translate(-28.0 -46.0) rotate(210)"/><use href="#key" transform="translate(77.0 -27.0) rotate(200)"/></g>
</defs>
<rect width="165" height="251" fill="#d8402a"/>
<g clip-path="url(#cvc)">
<use href="#motif" x="-48.6" y="-44.1"/>
<use href="#motif" x="115.9" y="-44.1"/>
<use href="#motif" x="33.7" y="37.9"/>
<use href="#motif" x="198.2" y="37.9"/>
<use href="#motif" x="-48.5" y="119.9"/>
<use href="#motif" x="116.0" y="119.9"/>
<use href="#motif" x="33.8" y="201.9"/>
<use href="#motif" x="198.3" y="201.9"/>
<use href="#motif" x="-48.4" y="283.9"/>
<use href="#motif" x="116.1" y="283.9"/>
</g>
<rect x="0" y="169.600" width="165" height="56.400" fill="#fff"/>
<text x="15.500" y="182.800" font-family="Liberation Serif,serif" font-size="9.600" fill="#c53a40" textLength="44" lengthAdjust="spacingAndGlyphs">Leo Tolstoy</text>
<text x="15.500" y="193.200" font-family="Liberation Serif,serif" font-size="9.600" fill="#3a3a3a" textLength="58" lengthAdjust="spacingAndGlyphs">War and Peace</text>
<text x="15.500" y="201.700" font-family="Liberation Serif,serif" font-size="4.700" fill="#555" textLength="83.500" lengthAdjust="spacingAndGlyphs">The definitive translation newly revised</text>
<text x="15.500" y="219" font-family="Liberation Serif,serif" font-weight="bold" font-size="4.300" fill="#c53a40" textLength="80" lengthAdjust="spacing">OXFORD WORLD’S CLASSICS</text>
</svg>
<style>
#det{position:absolute;left:947px;top:341px;width:190px;height:249px;overflow:hidden;font-size:10.900px;}
#det .k{position:absolute;left:4.200px;font-weight:bold;white-space:nowrap;line-height:14px;}
#det .v{position:absolute;left:51.800px;white-space:nowrap;line-height:14px;color:#000;}
#det .v a{color:#1616f5;text-decoration:none;}
#det .d{position:absolute;left:3px;white-space:nowrap;line-height:14px;font-size:11.400px;}
#tip{position:absolute;left:1013px;top:413.500px;width:107.500px;height:18px;background:#fff;border:1px solid #767676;box-shadow:1.500px 1.500px 2px rgba(0,0,0,0.350);font-size:10.600px;line-height:17px;color:#575757;padding-left:2.700px;white-space:nowrap;}
</style>
<div id="det">
<div class="k" style="top:5.100px">Authors:</div><div class="v" style="top:5.100px;letter-spacing:0.131px"><a>Leo Tolstoy</a> &amp; <a>Louise</a></div>
<div class="v" style="top:20.300px;letter-spacing:0.242px"><a>Maude</a></div>
<div class="k" style="top:36.500px">IDs:</div><div class="v" style="top:36.500px;letter-spacing:-0.002px"><a>Goodreads</a>, <a>Google</a>,</div>
<div class="v" style="top:51.700px;letter-spacing:-0.020px"><a>9780199232765</a></div>
<div class="k" style="top:67.800px">Tags:</div><div class="v" style="top:67.800px;letter-spacing:-0.382px"><a>Classics</a></div>
<div class="k" style="top:84px">Formats:</div><div class="v" style="top:84px;letter-spacing:-0.905px"><a>EPUB</a></div>
<div class="k" style="top:100.200px">Path:</div><div class="v" style="top:100.200px;letter-spacing:0.150px"><a>Click to open</a></div>
<div class="k" style="top:116.100px">Formats:</div><div class="v" style="top:116.100px;letter-spacing:-0.905px"><a>EPUB</a></div>
<div class="d" style="top:139.40px;letter-spacing:0.063px">Published to coincide with the</div>
<div class="d" style="top:154.35px;letter-spacing:-0.017px">centenary of Tolstoy's death, here is</div>
<div class="d" style="top:169.30px;letter-spacing:0.096px">an exciting new edition of one of</div>
<div class="d" style="top:184.25px;letter-spacing:0.089px">the great literary works of world</div>
<div class="d" style="top:199.20px;letter-spacing:0.002px">literature. Tolstoy's epic masterpiece</div>
<div class="d" style="top:214.15px;letter-spacing:0.036px">captures with unprecedented</div>
<div class="d" style="top:229.10px;letter-spacing:0.043px">immediacy the broad sweep of life</div>
<div class="d" style="top:244.05px;letter-spacing:0.057px">during the Napoleonic wars and the</div>
</div>
<div class="sb" style="left:1137px;top:341px;width:15px;height:249px;"></div>
<div class="th" style="left:1137px;top:357px;width:14px;height:63.700px;"></div>
<div class="abs" style="left:1136px;top:341px;width:1px;height:249px;background:#fafafa"></div>
<svg class="abs" style="left:1137px;top:341px" width="15" height="249" viewBox="0 0 15 249"><path d="M3.800 11.800l3.700-3.900 3.700 3.900" fill="none" stroke="#404040" stroke-width="1.400"/><path d="M4 238l3.500 3.500 3.500-3.500" fill="none" stroke="#404040" stroke-width="1.400"/></svg>
<div id="tip">isbn:9780199232765</div>
<div id="status" style="position:absolute;left:0;top:591px;width:1152px;height:21px;background:#f0f0f0;font-weight:bold;font-size:10.650px;">
<div class="lbl" style="left:4.300px;top:3.700px;">calibre 4.13 created by Kovid Goyal</div>
<div class="lbl" style="left:197px;top:3.700px;">[2939 books, 1 selected]</div>
<div class="abs" style="left:320.500px;top:2px;width:1px;height:17px;background:#dadada"></div>
<svg class="abs" style="left:1036px;top:0" width="116" height="21" viewBox="0 0 116 21">
<path d="M3 6.500l6 6.500" stroke="#333" stroke-width="1.400" stroke-linecap="round"/><path d="M9.300 6.200l-3.800 4.300" stroke="#444" stroke-width="1.100"/><path d="M5.300 10.500l-2.500 2.500" stroke="#7ab800" stroke-width="2" stroke-linecap="round"/>
<path d="M49.200 14.200h5l-2.500 2.800z" fill="#000"/>
<rect x="57.400" y="2" width="1" height="17" fill="#d0d0d0"/>
<circle cx="67" cy="10.700" r="5.200" fill="none" stroke="#c4c4c4" stroke-width="0.900"/>
<path d="M63.300 7a5.200 5.200 0 0 1 8.900 3.700" fill="none" stroke="#222" stroke-width="1.200"/>
</svg>
<div class="lbl" style="left:1048.500px;top:3.700px;letter-spacing:-0.100px;">Layout</div>
<div class="lbl" style="left:1112.300px;top:3.700px;letter-spacing:-0.100px;">Jobs: 0</div>
</div>
<div id="taskbar" style="position:absolute;left:0;top:612px;width:1152px;height:36px;background:#2b333f;">
<div class="abs" style="left:43px;top:0.500px;width:309.500px;height:35.500px;background:#f2f2f2;"></div>
<div class="abs" style="left:754.400px;top:0;width:43px;height:36px;background:#575d67;"></div>
<div class="lbl" style="left:79.900px;top:10.500px;font-size:13.100px;line-height:16px;color:#1f1f1f;">Type here to search</div>
<div class="lbl" style="left:1009.400px;top:11.300px;font-size:10.800px;line-height:14px;color:#fff;letter-spacing:-0.600px;">ENG</div>
<div class="lbl" style="left:1050.500px;top:3.100px;font-size:11px;line-height:14px;color:#fff;letter-spacing:-0.300px;">3:27 PM</div>
<div class="lbl" style="left:1041.300px;top:19.700px;font-size:11px;line-height:14px;color:#fff;letter-spacing:0px;">23/04/2020</div>
<svg class="abs" style="left:0;top:0" width="1152" height="36" viewBox="0 0 1152 36">
<defs>
<g id="calico"><rect x="0" y="0.500" width="4.600" height="18.400" fill="#5a2a10"/><rect x="0" y="1.800" width="4.600" height="0.800" fill="#8a5a20"/><rect x="0" y="16.500" width="4.600" height="0.800" fill="#8a5a20"/><rect x="4.600" y="2.300" width="4.300" height="16.600" fill="#64808a"/>
<polygon points="8.600,0.500 11.600,0 13.900,18.400 10.900,18.900" fill="#d9b664"/><polygon points="12.500,6.500 16.600,5.500 19.200,17.800 15,18.900" fill="#7aa7ff"/><polygon points="14.200,7.700 15.400,7.400 16.500,12.800 15.300,13.100" fill="#1020c0"/></g>
<radialGradient id="gFox" cx="0.5" cy="0.55" r="0.55"><stop offset="0" stop-color="#8a3df0"/><stop offset="0.380" stop-color="#7a35e0"/><stop offset="0.420" stop-color="#ff9a1a"/><stop offset="0.750" stop-color="#ff6a1a"/><stop offset="1" stop-color="#e8302a"/></radialGradient>
</defs>
<!-- windows logo -->
<g fill="#fff"><path d="M14 13.100l6.100-0.800v5.700h-6.100z"/><path d="M20.900 12.200l8.300-1.200v7h-8.300z"/><path d="M14 18.800h6.100v5.700l-6.100-0.800z"/><path d="M20.900 18.800h8.300v7l-8.300-1.200z"/></g>
<!-- search glass -->
<circle cx="65" cy="15.500" r="4.900" fill="none" stroke="#222" stroke-width="1.200"/><path d="M61.500 19.300l-6.500 6.700" stroke="#222" stroke-width="1.300"/>
<!-- task view -->
<g fill="none" stroke="#fff" stroke-width="1.100"><rect x="369" y="13.500" width="8.600" height="8.400"/><path d="M366.500 11.200h13.500M366.500 24.400h13.500M382.200 10.700v4M382.200 17v7.500"/></g>
<!-- calculator -->
<rect x="413" y="7" width="15.700" height="21.800" fill="#fff"/><rect x="415.200" y="9.200" width="11.300" height="3.200" fill="#2b333f"/>
<g fill="#2b333f"><path d="M415.600 15.500h2.600l-0.800 2.400h-2.600zM419.600 15.500h2.600l-0.800 2.400h-2.600zM423.600 15.500h2.600l-0.800 2.400h-2.600zM415.600 19.500h2.600l-0.800 2.400h-2.600zM419.600 19.500h2.600l-0.800 2.400h-2.600zM423.600 19.500h2.600l-0.800 2.400h-2.600zM415.600 23.500h2.600l-0.800 2.400h-2.600zM419.600 23.500h2.600l-0.800 2.400h-2.600zM423.600 23.500h2.600l-0.800 2.400h-2.600z"/></g>
<!-- firefox -->
<circle cx="465.200" cy="18.300" r="10" fill="url(#gFox)"/>
<path d="M456.500 12c1-3 3-4.500 5-5c-0.500 1.500 0 2.500 1 3c2-3.500 5-4.500 7-4c-1 1-1 2.500 0 4c3 1 5.500 4 5.700 7.500c-1.500-3-4-4.500-7-4.500c-3 0-5 1-6.700 3c-2-0.500-3.500-1.500-5-4z" fill="#ffb52a"/>
<path d="M469.500 5.800c2.500 0.500 5 4 5.500 8c-1-2-3-3.500-5.500-4c-1-1.500-1-3 0-4z" fill="#ffd53a"/>
<!-- folder -->
<path d="M499.800 11.200a1 1 0 0 1 1-1h6l1.500 2h10.600a1 1 0 0 1 1 1v12.500h-20.100z" fill="#e9a82a"/>
<rect x="499.800" y="13.500" width="20.100" height="12.200" rx="0.800" fill="#fbd35a"/>
<path d="M503.700 25.700v-5.500h12.300v5.500h-3v-2.500h-6.300v2.500z" fill="#3a8ee6"/>
<!-- outlook -->
<rect x="549" y="9" width="14.600" height="15.500" rx="1" fill="#1a8ae0"/><rect x="549" y="9" width="7.300" height="5.200" fill="#1272c4"/><rect x="556.300" y="9" width="7.300" height="5.200" fill="#3ab0f0"/><rect x="556.300" y="14.200" width="7.300" height="5.200" fill="#2a9ae8"/>
<path d="M549 19.500l14.600 5v2a1 1 0 0 1-1 1h-12.600a1 1 0 0 1-1-1z" fill="#1a6ac8"/>
<rect x="543" y="12.700" width="10.800" height="10.800" rx="1" fill="#0f5fb8"/>
<text x="548.400" y="21.300" font-family="Liberation Sans,sans-serif" font-weight="bold" font-size="8.500" text-anchor="middle" fill="#fff">o</text>
<!-- evernote -->
<circle cx="598.100" cy="17.900" r="10.400" fill="#fff"/>
<path d="M593.500 12.500l3-3h5.500c1.200 0 2 0.700 2.200 1.800c0.600 3.200 0.800 6.500 0.300 9.700c-0.300 2-1.300 3.500-3 3.700h-2.500v-3h1.800c0.500-1.500 0.500-3 0-4c-1.200 1-3 1.200-4.300 0.500c-0.300 2.500-1.300 3.500-3 3.300c-1.500-0.300-2.500-1.200-2.700-3c-0.300-2-0.300-4 0.300-6z" fill="#2db84d"/>
<!-- calibre icons -->
<use href="#calico" x="633" y="8"/>
<use href="#calico" x="766" y="8"/>
<!-- spotify -->
<circle cx="687" cy="17.900" r="11" fill="#1ed760"/>
<g fill="none" stroke="#15181c" stroke-linecap="round"><path d="M680.300 14.200c4.500-1.400 9.500-1 13.600 1.200" stroke-width="2.100"/><path d="M681 18.200c3.800-1.100 8-0.700 11.500 1.100" stroke-width="1.800"/><path d="M681.800 21.900c3.100-0.800 6.400-0.500 9.200 0.900" stroke-width="1.500"/></g>
<!-- adobe cc -->
<rect x="721.500" y="7.700" width="20" height="18.700" rx="3.500" fill="#e0141e"/>
<g fill="none" stroke="#fff" stroke-width="1"><circle cx="729" cy="17.800" r="3.800"/><circle cx="733.500" cy="16.800" r="4.800"/><path d="M726 21.500c2 1.500 9 1.800 11.500-1"/></g>
<!-- help -->
<circle cx="809.800" cy="18.400" r="9.300" fill="#1a8ae0" stroke="#fff" stroke-width="1.700"/>
<text x="809.800" y="23.600" font-family="Liberation Sans,sans-serif" font-weight="bold" font-size="14.500" text-anchor="middle" fill="#fff">?</text>
<!-- chevron -->
<path d="M832.300 21l5.400-5.400 5.400 5.400" fill="none" stroke="#fff" stroke-width="1.200"/>
<!-- plug/battery -->
<g fill="#fff"><rect x="862.500" y="14" width="11" height="7.500" rx="0.800"/><rect x="873.500" y="16" width="1.200" height="3.500"/><path d="M859 16.200h2v-2.400h1.200v7.600h-1.200v-2.400h-2z"/></g>
<rect x="864" y="16" width="8" height="3.300" fill="#2b333f" opacity="0.350"/>
<!-- cloud -->
<path d="M890.500 22.500a3 3 0 0 1-0.300-6a4.300 4.300 0 0 1 7.800-1.600a3.600 3.600 0 0 1 4.400 3.800a2 2 0 0 1-0.500 3.800z" fill="#fff"/>
<!-- wifi -->
<g fill="none" stroke="#fff" stroke-width="1.100" stroke-linecap="round"><path d="M919 24c0.300-6.500 4.500-11 11-11.300"/><path d="M922.500 24c0.200-4.300 3-7.300 7.300-7.600" opacity="0.900"/><path d="M926 24c0.100-2 1.600-3.700 3.700-3.900" opacity="0.800"/></g><circle cx="929.300" cy="23.700" r="1" fill="#fff"/>
<!-- volume -->
<g fill="none" stroke="#fff" stroke-width="1"><path d="M946 16h2.500l3.500-3.300v11.600l-3.500-3.300h-2.500z"/><path d="M954 15.500a4 4 0 0 1 0 6"/><path d="M956 13.500a7 7 0 0 1 0 10" opacity="0.600"/><path d="M958 11.800a9.500 9.500 0 0 1 0 13.400" opacity="0.350"/></g>
<!-- pen -->
<g fill="none" stroke="#fff" stroke-width="1.200" stroke-linecap="round"><path d="M981 24.500c-2-1.500-1-4 1.500-4.500l6-2c2.500-1 3-3.500 1-4.500"/><path d="M983.500 24l5.500-12"/><circle cx="989.500" cy="12.500" r="1.600"/></g>
<!-- notification -->
<path d="M1115 11.300h13.800v10.400h-8l-3 3.300v-3.300h-2.800z" fill="#fff"/>
<path d="M1117.500 14.200h9M1117.500 16.500h9M1117.500 18.800h5" stroke="#2b333f" stroke-width="0.800"/>
<circle cx="1127" cy="22.500" r="3" fill="#2b333f" stroke="#fff" stroke-width="0.900"/>
<rect x="1147.300" y="0" width="0.800" height="36" fill="#6a717b"/>
<!-- active indicators -->
<g fill="#76b9ed"><rect x="447" y="34" width="36" height="2"/><rect x="536.400" y="34" width="35.600" height="2"/><rect x="668.800" y="34" width="36.200" height="2"/><rect x="754.400" y="34" width="43" height="2"/></g>
</svg>
</div>
</body>
</html>
